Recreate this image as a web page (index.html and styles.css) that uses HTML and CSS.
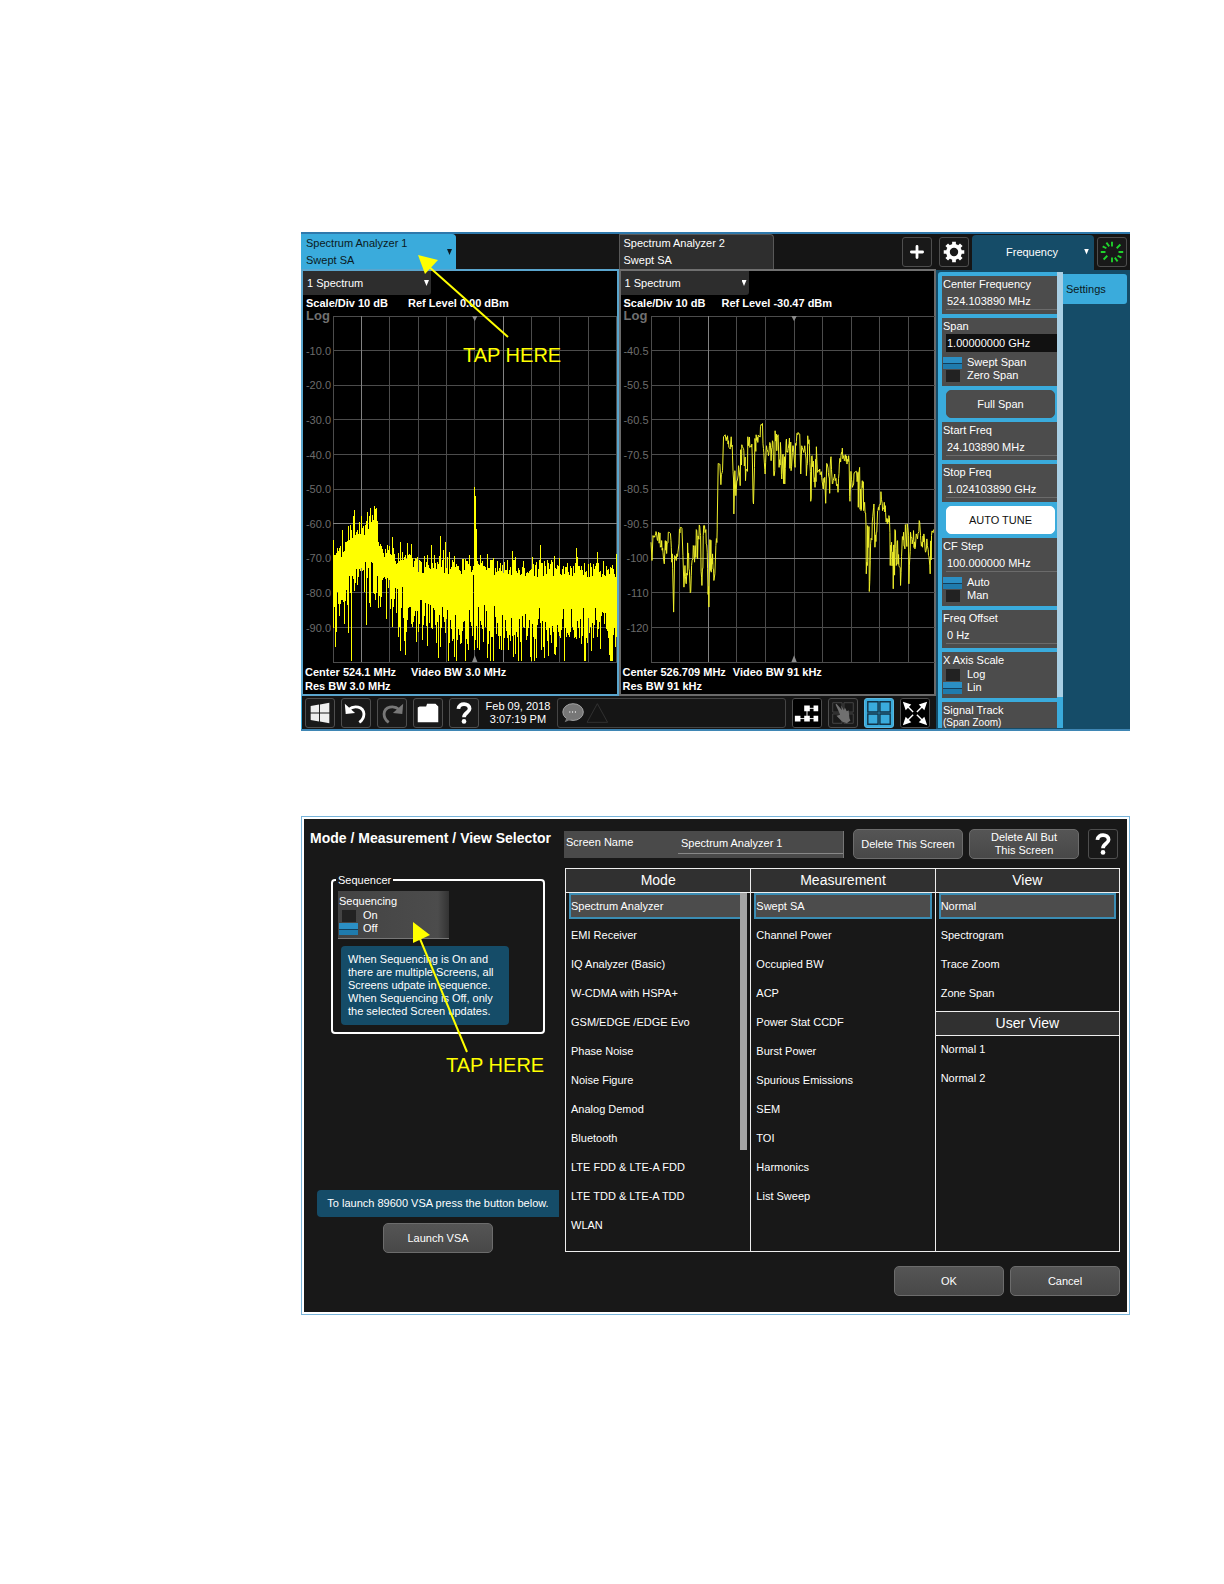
FILE: index.html
```html
<!DOCTYPE html>
<html lang="en">
<head>
<meta charset="utf-8">
<title>Spectrum Analyzer</title>
<link rel="stylesheet" href="styles.css">
</head>
<body>
<main class="page">

<section class="analyzer" aria-label="Spectrum analyzer">
  <div class="workspace">
    <div class="screens">
      <section class="screen active">
        <div class="tab-row">
          <button class="tab" type="button"><span>Spectrum Analyzer 1<br>Swept SA</span><i class="caret"></i></button>
        </div>
        <div class="window">
          <div class="trace-picker"><select aria-label="Window 1"><option>1 Spectrum</option></select><i class="caret"></i></div>
          <p class="readout scale"><span>Scale/Div 10 dB</span><span>Ref Level 0.00 dBm</span></p>
          <div class="plot">
            <ul class="axis"><li class="log">Log</li><li>-10.0</li><li>-20.0</li><li>-30.0</li><li>-40.0</li><li>-50.0</li><li>-60.0</li><li>-70.0</li><li>-80.0</li><li>-90.0</li></ul>
            <svg class="chart" id="chart1" viewBox="0 0 850 1040" preserveAspectRatio="none"></svg>
          </div>
          <p class="readout foot"><span>Center 524.1 MHz</span><span>Video BW 3.0 MHz</span></p>
          <p class="readout foot">Res BW 3.0 MHz</p>
        </div>
      </section>
      <section class="screen">
        <div class="tab-row">
          <button class="tab" type="button"><span>Spectrum Analyzer 2<br>Swept SA</span></button>
          <button class="tool add" type="button" aria-label="Add screen"><svg viewBox="0 0 30 30"><path d="M15 9v12M9 15h12" stroke="#fff" stroke-width="3" stroke-linecap="round"/></svg></button>
        </div>
        <div class="window">
          <div class="trace-picker"><select aria-label="Window 2"><option>1 Spectrum</option></select><i class="caret"></i></div>
          <p class="readout scale"><span>Scale/Div 10 dB</span><span>Ref Level -30.47 dBm</span></p>
          <div class="plot">
            <ul class="axis"><li class="log">Log</li><li>-40.5</li><li>-50.5</li><li>-60.5</li><li>-70.5</li><li>-80.5</li><li>-90.5</li><li>-100</li><li>-110</li><li>-120</li></ul>
            <svg class="chart" id="chart2" viewBox="0 0 852 1040" preserveAspectRatio="none"></svg>
          </div>
          <p class="readout foot tight"><span>Center 526.709 MHz</span><span>Video BW 91 kHz</span></p>
          <p class="readout foot">Res BW 91 kHz</p>
        </div>
      </section>
    </div>
    <footer class="toolbar">
      <button class="tool" type="button" aria-label="Windows"><svg viewBox="0 0 30 30"><path fill="#eee" d="M5 7.500l9-1.500v8.500H5zM15 5.800l10-1.800v10.500H15zM5 15.500h9V24l-9-1.500zM15 15.500h10V26l-10-1.800z"/></svg></button>
      <button class="tool" type="button" aria-label="Undo"><svg viewBox="0 0 30 30"><path fill="none" stroke="#fff" stroke-width="3" d="M7 11.500C13 6 23 8 23.500 16c0 4-2 7-5 9"/><path fill="#fff" d="M3 5l1 11 10-1z"/></svg></button>
      <button class="tool" type="button" aria-label="Redo"><svg viewBox="0 0 30 30"><path fill="none" stroke="#777" stroke-width="3" d="M23 11.500C17 6 7 8 6.500 16c0 4 2 7 5 9"/><path fill="#777" d="M27 5l-1 11-10-1z"/></svg></button>
      <button class="tool" type="button" aria-label="Open"><svg viewBox="0 0 30 30"><path fill="#fff" d="M4 9l2-1h7l1-3h9l3 3v17H4z"/></svg></button>
      <button class="tool" type="button" aria-label="Help"><svg viewBox="0 0 30 30"><path fill="none" stroke="#fff" stroke-width="4" d="M9 10.500c.5-7 12-6.500 12 0 0 4-6 4-6 9"/><circle cx="15" cy="24" r="2.500" fill="#fff"/></svg></button>
      <time class="clock">Feb 09, 2018<br>3:07:19 PM</time>
      <div class="messages"><svg viewBox="0 0 60 30"><ellipse cx="14" cy="14" rx="11" ry="9" fill="#777" stroke="#aaa"/><path d="M7 20l-2 5 7-3z" fill="#777"/><path d="M10 14h1m2 0h1m2 0h1" stroke="#eee" stroke-width="1.500"/><path d="M40 5L29 25h22z" fill="none" stroke="#333"/></svg></div>
      <button class="tool" type="button" aria-label="Block diagram"><svg viewBox="0 0 30 30"><rect width="30" height="30" fill="#000"/><path d="M15 10h10M15 10v11M5 21h20" stroke="#fff" fill="none"/><path fill="#fff" d="M12 7h6v6h-6zM22 7h5v6h-5zM2 18h6v6H2zM12 18h6v6h-6zM22 18h5v6h-5z"/></svg></button>
      <button class="tool" type="button" aria-label="Touch off"><svg viewBox="0 0 30 30"><path fill="none" stroke="#484848" d="M4 4h10v10H4zM16 4h10v10H16zM4 16h10v10H4zM16 16h10v10H16z"/><path fill="#707070" d="M8 5l6 7-1-5 3 5 1-3 2 4 2-1 1 9 1 2-4 3-5-2-6-6 4-1-5-11z"/></svg></button>
      <button class="tool chosen" type="button" aria-label="Multiscreen"><svg viewBox="0 0 30 30"><path fill="none" stroke="#123347" stroke-width="1.500" d="M3 3h11v11H3zM16 3h11v11H16zM3 16h11v11H3zM16 16h11v11H16z"/></svg></button>
      <button class="tool" type="button" aria-label="Full screen"><svg viewBox="0 0 30 30"><rect width="30" height="30" fill="#000"/><path stroke="#fff" stroke-width="1.500" d="M5 6l8 8M25 6l-8 8M5 25l8-8M25 25l-8-8"/><path fill="#fff" d="M2 3l9 3-6 6zM28 3l-9 3 6 6zM2 28l3-9 6 6zM28 28l-3-9-6 6z"/></svg></button>
    </footer>
  </div>

  <aside class="menu">
    <header class="menu-head">
      <button class="tool" type="button" aria-label="Settings"><svg viewBox="0 0 30 30"><circle cx="15" cy="15" r="6.500" fill="none" stroke="#fff" stroke-width="4"/><path stroke="#fff" stroke-width="4" d="M15 4v4M15 22v4M4 15h4M22 15h4M7.200 7.200l3 3M19.800 19.800l3 3M7.200 22.800l3-3M19.800 10.200l3-3"/></svg></button>
      <button class="menu-title" type="button"><span>Frequency</span><i class="caret"></i></button>
      <button class="tool" type="button" aria-label="Status"><svg viewBox="0 0 30 30"><path stroke="#1fd32c" stroke-width="2" d="M15 4v5M15 21v5M3 15h5M22 15h5M5 9l4 2M21 19l4 2M6 23l4-4M20 11l4-4M9 5l3 4M18 21l3 4"/></svg></button>
    </header>
    <div class="menu-body">
      <div class="controls">
        <div class="cards">
          <div class="card"><label for="cf">Center Frequency</label><input id="cf" type="text" value="524.103890 MHz"></div>
          <div class="card"><label for="span">Span</label><input id="span" class="focus" type="text" value="1.00000000 GHz">
            <div class="toggle"><label><input type="radio" name="span" checked>Swept Span</label><label><input type="radio" name="span">Zero Span</label></div></div>
          <button class="soft" type="button">Full Span</button>
          <div class="card"><label for="start">Start Freq</label><input id="start" type="text" value="24.103890 MHz"></div>
          <div class="card"><label for="stop">Stop Freq</label><input id="stop" type="text" value="1.024103890 GHz"></div>
          <button class="soft light" type="button">AUTO TUNE</button>
          <div class="card"><label for="step">CF Step</label><input id="step" type="text" value="100.000000 MHz">
            <div class="toggle"><label><input type="radio" name="step" checked>Auto</label><label><input type="radio" name="step">Man</label></div></div>
          <div class="card"><label for="off">Freq Offset</label><input id="off" type="text" value="0 Hz"></div>
          <div class="card"><span>X Axis Scale</span>
            <div class="toggle"><label><input type="radio" name="x">Log</label><label><input type="radio" name="x" checked>Lin</label></div></div>
          <div class="card cut"><span>Signal Track</span><small>(Span Zoom)</small></div>
        </div>
        <div class="thumb"></div>
      </div>
      <button class="side-tab" type="button">Settings</button>
    </div>
  </aside>

  <svg class="callout" viewBox="0 0 828 499"><path d="M207 105L126 33" stroke="#ff0" stroke-width="2"/><path d="M117 23l20 5-13 14z" fill="#ff0"/></svg>
  <p class="tap tap-one">TAP HERE</p>
</section>

<section class="dialog" aria-label="Mode / Measurement / View Selector">
 <div class="dialog-inner">
  <div class="left">
    <h1>Mode / Measurement / View Selector</h1>
    <fieldset class="sequencer">
      <legend>Sequencer</legend>
      <div class="card"><span>Sequencing</span>
        <div class="toggle"><label><input type="radio" name="seq">On</label><label><input type="radio" name="seq" checked>Off</label></div></div>
      <p class="note">When Sequencing is On and<br>there are multiple Screens, all<br>Screens udpate in sequence.<br>When Sequencing is Off, only<br>the selected Screen updates.</p>
    </fieldset>
    <div class="launch">
      <p>To launch 89600 VSA press the button below.</p>
      <button class="soft" type="button">Launch VSA</button>
    </div>
  </div>
  <div class="right">
    <div class="name-row">
      <div class="name"><label for="screen">Screen Name</label><input id="screen" type="text" value="Spectrum Analyzer 1"></div>
      <button class="soft" type="button">Delete This Screen</button>
      <button class="soft" type="button">Delete All But<br>This Screen</button>
      <button class="tool" type="button" aria-label="Help"><svg viewBox="0 0 30 30"><path fill="none" stroke="#fff" stroke-width="4" d="M9 10.500c.5-7 12-6.500 12 0 0 4-6 4-6 9"/><circle cx="15" cy="24" r="2.500" fill="#fff"/></svg></button>
    </div>
    <div class="lists">
      <section class="column mode"><h2>Mode</h2>
        <ul><li><button class="on" type="button">Spectrum Analyzer</button></li><li><button type="button">EMI Receiver</button></li><li><button type="button">IQ Analyzer (Basic)</button></li><li><button type="button">W-CDMA with HSPA+</button></li><li><button type="button">GSM/EDGE /EDGE Evo</button></li><li><button type="button">Phase Noise</button></li><li><button type="button">Noise Figure</button></li><li><button type="button">Analog Demod</button></li><li><button type="button">Bluetooth</button></li><li><button type="button">LTE FDD &amp; LTE-A FDD</button></li><li><button type="button">LTE TDD &amp; LTE-A TDD</button></li><li><button type="button">WLAN</button></li></ul>
        <div class="list-thumb"></div>
      </section>
      <section class="column"><h2>Measurement</h2>
        <ul><li><button class="on" type="button">Swept SA</button></li><li><button type="button">Channel Power</button></li><li><button type="button">Occupied BW</button></li><li><button type="button">ACP</button></li><li><button type="button">Power Stat CCDF</button></li><li><button type="button">Burst Power</button></li><li><button type="button">Spurious Emissions</button></li><li><button type="button">SEM</button></li><li><button type="button">TOI</button></li><li><button type="button">Harmonics</button></li><li><button type="button">List Sweep</button></li></ul>
      </section>
      <section class="column"><h2>View</h2>
        <ul><li><button class="on" type="button">Normal</button></li><li><button type="button">Spectrogram</button></li><li><button type="button">Trace Zoom</button></li><li><button type="button">Zone Span</button></li></ul>
        <h2 class="second">User View</h2>
        <ul><li><button type="button">Normal 1</button></li><li><button type="button">Normal 2</button></li></ul>
      </section>
    </div>
    <div class="actions"><button class="soft" type="button">OK</button><button class="soft" type="button">Cancel</button></div>
  </div>
 </div>
 <svg class="callout" viewBox="0 0 828 499"><path d="M166 236L117 118" stroke="#ff0" stroke-width="2"/><path d="M112 106l17 13-17 8z" fill="#ff0"/></svg>
 <p class="tap tap-two">TAP HERE</p>
</section>

</main>
<script src="traces.js"></script>
</body>
</html>
```
FILE: styles.css
```css
* { box-sizing: border-box; }
body, p, ul, h1, h2, fieldset { margin: 0; padding: 0; }
ul { list-style: none; }
body { background: #fff; font: 11px/16px "Liberation Sans", Arial, sans-serif; color: #fff; }
button, input, select { font: inherit; color: inherit; margin: 0; padding: 0; border: 0; background: none; border-radius: 0; min-width: 0; }
button { cursor: pointer; }
svg { display: block; }

.page { padding: 232px 94px 269px 301px; display: grid; gap: 85px; }

.analyzer { position: relative; display: grid; grid-template-columns: minmax(0, 1fr) 194px; border-top: 2px solid #2f79ac; border-bottom: 2px solid #3f86b4; background: #151515; height: 499px; }
.workspace { display: flex; flex-direction: column; }
.screens { display: grid; grid-template-columns: 1fr 1fr; }
.tab-row { display: flex; justify-content: space-between; height: 35px; }
.tab { width: 155px; display: flex; justify-content: space-between; align-items: center; text-align: left; line-height: 17px; padding: 0 3px 0 4px; background: #2e2e2e; border: 1px solid #585858; border-bottom: 0; border-radius: 0 4px 0 0; }
.active .tab { background: #3aabdc; border-color: #3aabdc; color: #0b1a22; }
.caret { width: 5px; height: 6px; background: currentColor; clip-path: polygon(0 0, 100% 0, 50% 100%); flex: none; }
.window { border: 2px solid #6a6a6a; border-top-color: #707070; background: #000; height: 427px; }
.active .window { border-color: #5aa5cd; }
.trace-picker { position: relative; width: 128px; height: 24px; display: flex; align-items: center; background: #2d2d2d; border-radius: 0 0 3px 0; }
.trace-picker select { appearance: none; width: 100%; height: 100%; padding-left: 4px; }
.trace-picker .caret { position: absolute; right: 2px; }
.readout { font-weight: 700; white-space: pre; padding-left: 3px; line-height: 16px; height: 16px; display: flex; }
.scale { gap: 20px; }
.screen:not(.active) .scale { gap: 16px; }
.foot { padding-left: 2px; line-height: 14px; height: 14px; gap: 15px; }
.foot.tight { gap: 7px; }
.plot { display: flex; height: 346px; margin: 5px 0 3px; }
.axis { width: 30px; margin-top: -17px; height: 346px; display: flex; flex-direction: column; color: #6c6c6c; padding-right: 2px; text-align: right; }
.axis li { flex: 1; display: flex; align-items: center; justify-content: flex-end; }
.axis .log { font-weight: 700; font-size: 13px; justify-content: flex-start; padding-left: 3px; color: #707070; }
.chart { flex: 1; min-width: 0; height: 100%; overflow: visible; }
.chart path { vector-effect: non-scaling-stroke; fill: none; }
.chart .grid { stroke: #4c4c4c; shape-rendering: crispEdges; }
.chart .major { stroke: #828282; shape-rendering: crispEdges; }
.chart .trace { fill: #ff0; shape-rendering: crispEdges; }
.chart .soft-trace { stroke: #f0f02a; stroke-width: 1; }
.chart .mark { fill: #8a8a8a; }

.tool { flex: none; width: 30px; height: 30px; background: #191919; border: 1px solid #4e4e4e; border-radius: 3px; overflow: hidden; }
.tool svg { width: 28px; height: 28px; }
.add { margin: 3px 4px 0 0; }
.toolbar { flex: 1; display: flex; gap: 6px; padding: 0 6px 0 3px; background: #151515; border-left: 1px solid #3aabdc; align-items: center; }
.clock { width: 66px; text-align: center; line-height: 13px; white-space: nowrap; }
.messages { flex: 1; height: 30px; border: 1px solid #444; border-radius: 3px; }
.messages svg { width: 60px; height: 28px; }
.tool.chosen { background: #3aabdc; border-color: #58b7e0; }

.menu { background: #154c68; display: flex; flex-direction: column; min-height: 0; }
.menu-head { background: #151515; display: flex; height: 36px; align-items: center; padding: 0 3px; gap: 3px; }
.menu-title { flex: 1; align-self: stretch; background: #154c68; border-radius: 4px 4px 0 0; display: flex; align-items: center; padding: 0 5px 2px 34px; justify-content: space-between; margin-top: 1px; }
.menu-body { flex: 1; min-height: 0; display: flex; padding: 2px 3px 1px 2px; align-items: flex-start; }
.controls { width: 125px; height: 100%; flex: none; overflow: hidden; background: #3aabdc; display: flex; border-radius: 3px 0 0 0; }
.cards { flex: 1; padding: 4px 0 0 4px; display: flex; flex-direction: column; gap: 4px; min-width: 0; }
.thumb { width: 6px; height: 425px; background: #a9cfe4; }
.side-tab { flex: 1; height: 30px; margin-top: 2px; background: #3aabdc; color: #0b1a22; text-align: left; padding-left: 3px; border-radius: 0 3px 3px 0; }
.card { background: #4c4c4c; padding: 0 0 4px 1px; display: flex; flex-direction: column; flex: none; }
.card > label, .card > span { line-height: 16px; height: 16px; }
.card > input { width: calc(100% - 3px); height: 18px; margin-left: 3px; padding-left: 1px; border-bottom: 1px solid #6b6b6b; }
.card > .focus { background: #111; border: 0; }
.toggle { display: flex; flex-direction: column; padding-top: 4px; }
.card > span + .toggle { padding-top: 0; }
.toggle label { display: flex; align-items: center; height: 13px; gap: 5px; line-height: 13px; }
.toggle input { appearance: none; width: 14px; height: 12px; margin: 0 2px 0 3px; background: #222; }
.toggle input:checked { width: 19px; margin: 0; height: 12px; background: linear-gradient(#2b8fc4 50%, #123f5c 50%, #123f5c 58%, #1f7bad 58%); }
.soft { height: 30px; width: 110px; background: linear-gradient(#555, #484848); border: 1px solid #6c6c6c; border-radius: 5px; line-height: 13px; flex: none; }
.cards .soft { height: 28px; width: auto; margin: 0 2px 0 4px; border-color: #4c4c4c; background: #4c4c4c; }
.cards .soft.light { background: #fff; color: #111; border-color: #fff; }
.cut small { font-size: 10px; line-height: 10px; }

.callout { position: absolute; left: 0; top: -2px; width: 828px; height: 499px; pointer-events: none; }
.tap { position: absolute; color: #ff0; font-size: 20px; line-height: 22px; white-space: nowrap; pointer-events: none; }
.tap-one { left: 162px; top: 110px; }
.tap-two { left: 144px; top: 237px; }

.dialog { position: relative; border: 1px solid #78b4da; padding: 2px; }
.dialog .callout { left: -1px; top: -1px; }
.dialog-inner { background: #181818; display: grid; grid-template-columns: 260px minmax(0, 1fr); padding: 10px 7px 16px 0; min-height: 492px; }
.left { display: flex; flex-direction: column; }
.left h1 { font-size: 14px; line-height: 18px; padding-left: 6px; white-space: nowrap; }
.sequencer { margin: 25px 0 0 27px; width: 214px; border: 2px solid #fff; border-radius: 4px; padding: 3px 0 0 5px; height: 162px; }
.sequencer legend { padding: 0 2px; margin-left: -2px; }
.sequencer .card { width: 111px; height: 48px; padding-top: 2px; background: linear-gradient(90deg, #434343, #4c4c4c 90%, #333); border-bottom: 1px solid #777; }
.note { margin: 7px 0 0 3px; width: 168px; height: 79px; padding: 7px 0 0 7px; background: #154c68; border-radius: 4px; line-height: 13px; white-space: nowrap; }
.launch { margin-top: auto; padding: 0 5px 43px 13px; display: flex; flex-direction: column; align-items: center; gap: 6px; }
.launch p { background: #154c68; width: 100%; line-height: 27px; text-align: center; border-radius: 4px 0 0 4px; white-space: nowrap; }
.name-row { display: flex; align-items: center; gap: 6px; padding-right: 2px; }
.name { flex: 1; display: flex; align-items: center; height: 27px; background: #4a4a4a; border-right: 1px solid #777; margin-right: 3px; padding-left: 2px; }
.name label { width: 112px; flex: none; padding-bottom: 4px; }
.name input { flex: 1; height: 20px; padding: 0 0 2px 3px; border-bottom: 1px solid #888; }
.name-row .tool { margin-left: 3px; }
.lists { margin-top: 9px; margin-left: 1px; display: grid; grid-template-columns: 1fr 1fr 1fr; border: 1px solid #eee; height: 384px; }
.column { position: relative; }
.column + .column { border-left: 1px solid #eee; }
.column h2 { font-size: 14px; font-weight: 400; line-height: 23px; height: 24px; text-align: center; background: #303030; border-bottom: 1px solid #eee; }
.column .second { border-top: 1px solid #eee; margin-top: 2px; height: 25px; }
.column li { height: 29px; padding: 0 3px; }
.column li button { width: 100%; height: 26px; text-align: left; border: 2px solid transparent; }
.column li .on { background: #4c4c4c; border-color: #3b8db4; }
.list-thumb { position: absolute; right: 3px; top: 24px; width: 7px; height: 257px; background: #a5a5a5; }
.actions { display: flex; justify-content: flex-end; gap: 6px; margin-top: 14px; }
```
FILE: traces.js
```javascript
(function () {
  var NS = 'http://www.w3.org/2000/svg';

  function add(svg, cls, d) {
    var p = document.createElementNS(NS, 'path');
    p.setAttribute('class', cls);
    p.setAttribute('d', d);
    svg.appendChild(p);
  }

  function graticule(svg, pitch, majorX, majorY) {
    var width = svg.viewBox.baseVal.width;
    var thin = '', bold = '';
    for (var i = 0; i <= 10; i++) {
      var v = i * pitch <= width ? 'M' + i * pitch + ' 0V1040' : '';
      var h = 'M0 ' + i * 104 + 'H' + width;
      if (majorX.indexOf(i) >= 0) bold += v; else thin += v;
      if (majorY.indexOf(i) >= 0) bold += h; else thin += h;
    }
    add(svg, 'grid', thin);
    add(svg, 'major', bold);
    var c = pitch * 5 - 8;
    add(svg, 'mark', 'M' + c + ' 0h16l-8 16zM' + c + ' 1040h16l-8-20z');
  }

  function lerp(table, x) {
    for (var i = 1; i < table.length; i++) {
      if (x <= table[i][0]) {
        var a = table[i - 1], b = table[i];
        return a[1] + (b[1] - a[1]) * (x - a[0]) / (b[0] - a[0]);
      }
    }
    return table[table.length - 1][1];
  }

  var seed = 41;
  function rnd() {
    seed = (seed * 1103515245 + 12345) % 2147483648;
    return seed / 2147483648;
  }

  // Wide sweep: one min/max bar per display column.
  var one = document.getElementById('chart1');
  graticule(one, 85, [1, 6], [6, 7]);
  var top = [[0, 735], [30, 695], [60, 645], [90, 635], [115, 620], [130, 635], [140, 695], [200, 725], [260, 748], [420, 756], [850, 764]];
  var low = [[0, 860], [40, 830], [65, 775], [110, 770], [140, 805], [220, 870], [300, 915], [850, 925]];
  var spikes = [[27, 642], [45, 630], [63, 582], [84, 600], [102, 590], [123, 572], [129, 578], [177, 665], [234, 685], [321, 662], [336, 680], [423, 514], [426, 540], [429, 640], [621, 687], [729, 697], [732, 725], [849, 715]];
  var d = '';
  for (var x = 0; x < 850; x += 3) {
    var t = lerp(top, x) + (rnd() - 0.5) * 50 - Math.pow(rnd(), 7) * 40;
    var b = lerp(low, x) + (rnd() - 0.5) * 100 + Math.pow(rnd(), 4) * 150;
    spikes.forEach(function (s) { if (Math.abs(s[0] - x) <= 1) t = s[1]; });
    if (x === 54 || x === 345) b = 1038;
    if (x === 420) b = 750;
    d += 'M' + x + ' ' + t.toFixed(0) + 'h3V' + Math.min(b, 1038).toFixed(0) + 'h-3z';
  }
  add(one, 'trace', d);

  // Narrow sweep: sampled polyline with fine ripple between the samples.
  var two = document.getElementById('chart2');
  graticule(two, 86, [2], [6, 7]);
  var samples = ('0 680 3 735 6 660 11 665 15 648 20 675 23 650 28 695 32 675 36 710 40 745 43 675 47 714 52 650 57 652 61 695 65 760 68 890 71 720 76 735 81 710 84 685 88 635 93 638 96 720 99 815 102 750 106 805 110 682 114 760 118 832 122 750 127 690 131 740 136 642 140 730 145 628 149 660 153 810 157 660 161 630 166 685 170 760 174 875 177 672 181 770 185 715 189 795 192 775 195 690 199 640 ' +
    '199 625 202 443 207 445 210 507 215 465 218 363 223 357 226 375 230 360 234 395 238 400 241 363 245 420 249 595 252 465 255 540 258 495 263 450 268 510 273 387 279 405 284 495 291 363 297 395 303 385 308 565 311 455 316 357 321 380 329 333 335 323 339 410 343 475 347 390 353 420 357 380 361 435 365 375 369 480 373 345 378 405 382 357 385 455 389 380 393 490 397 415 402 505 407 370 411 410 416 367 421 465 426 390 433 455 437 377 442 350 447 355 450 475 453 390 459 410 462 390 467 480 471 360 476 390 480 557 484 420 489 475 493 515 497 393 501 470 507 460 513 485 518 520 522 485 525 563 528 443 533 470 537 533 541 423 546 505 552 475 557 505 562 530 566 445 571 420 575 397 581 435 585 417 589 445 594 420 598 557 601 467 605 515 610 475 618 467 623 575 627 455 631 585 635 495 639 585 642 560 646 625 ' +
    '647 775 651 630 656 828 660 685 665 620 670 565 673 695 677 650 682 585 686 570 691 528 696 585 701 560 705 590 710 625 715 600 719 750 723 680 728 820 733 642 737 750 741 675 745 750 750 810 754 700 759 650 763 700 770 625 775 805 780 650 785 685 789 645 793 700 797 655 801 670 806 615 811 675 816 695 820 655 825 710 829 670 834 720 839 775 843 660 849 642').split(' ').map(Number);
  var line = 'M0 680';
  for (var i = 2; i < samples.length; i += 2) {
    var px = samples[i - 2], py = samples[i - 1], qx = samples[i], qy = samples[i + 1];
    if (qx - px > 3) {
      var upper = Math.min(py, qy), lower = Math.max(py, qy);
      line += 'L' + (px + 1.5) + ' ' + (upper + (lower - upper) * rnd()).toFixed(0);
      line += 'L' + (qx - 1) + ' ' + (upper + (lower - upper) * rnd()).toFixed(0);
    }
    line += 'L' + qx + ' ' + qy;
  }
  add(two, 'soft-trace', line);
})();
```
